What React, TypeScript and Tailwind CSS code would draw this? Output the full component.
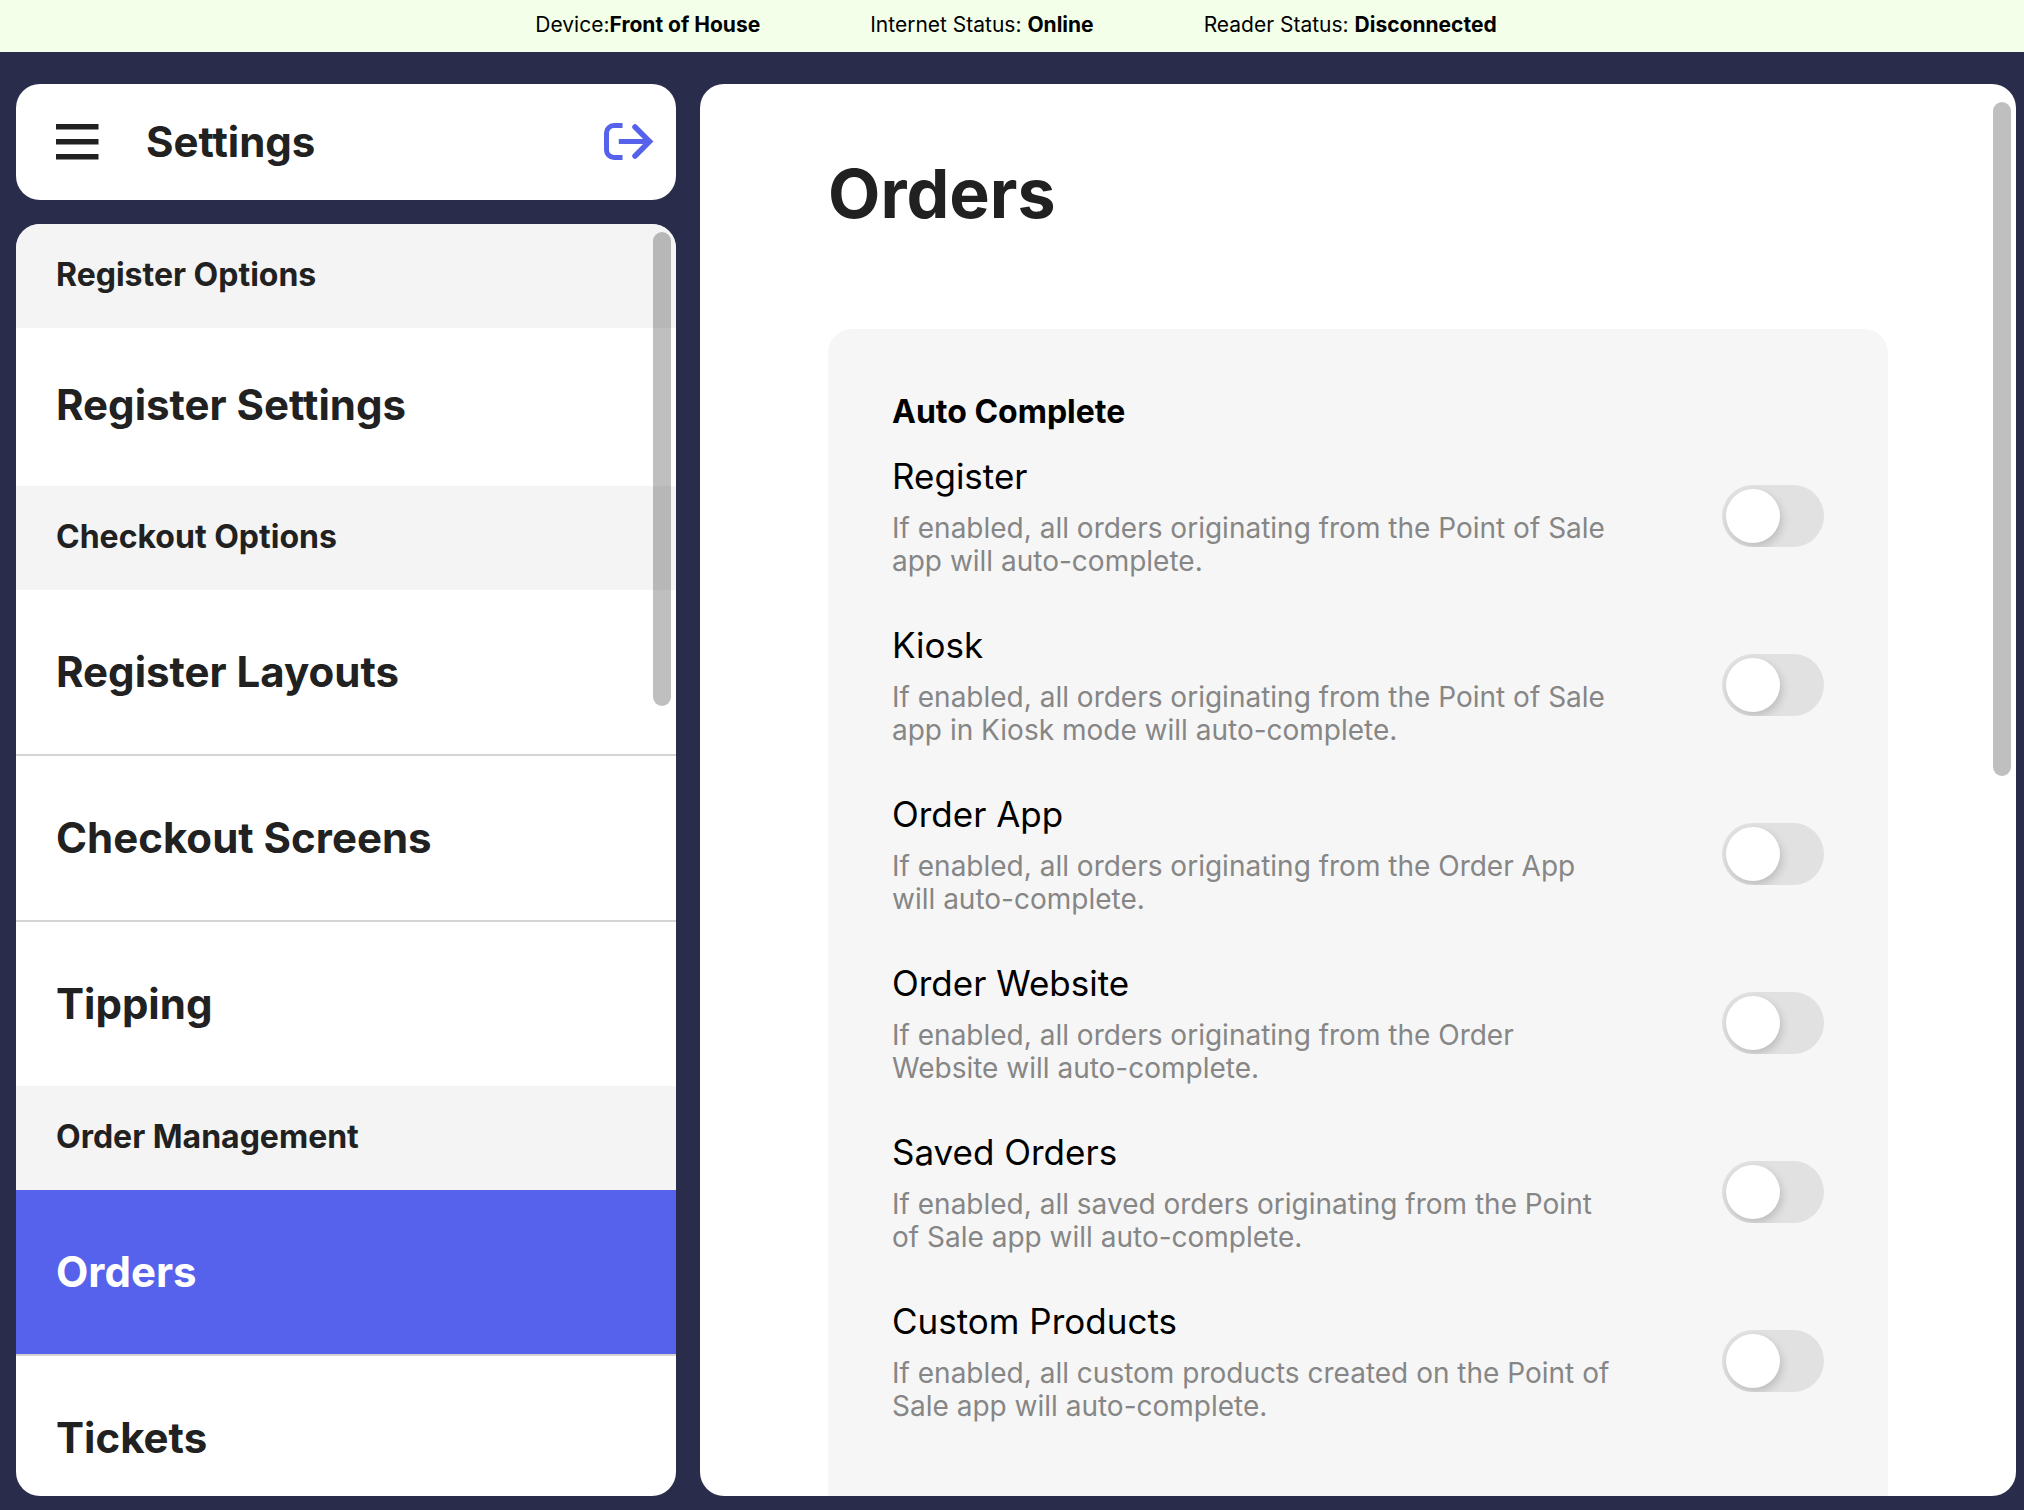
import { Fragment } from "react";

type Item = { label: string; active?: boolean };
type Section = { heading: string; items: Item[]; compact?: boolean };

const sections: Section[] = [
  { heading: "Register Options", items: [{ label: "Register Settings" }], compact: true },
  {
    heading: "Checkout Options",
    items: [{ label: "Register Layouts" }, { label: "Checkout Screens" }, { label: "Tipping" }],
  },
  { heading: "Order Management", items: [{ label: "Orders", active: true }, { label: "Tickets" }] },
];

const options = [
  {
    id: "register",
    title: "Register",
    text: "If enabled, all orders originating from the Point of Sale app will auto-complete.",
  },
  {
    id: "kiosk",
    title: "Kiosk",
    text: "If enabled, all orders originating from the Point of Sale app in Kiosk mode will auto-complete.",
  },
  {
    id: "order-app",
    title: "Order App",
    text: "If enabled, all orders originating from the Order App will auto-complete.",
  },
  {
    id: "order-website",
    title: "Order Website",
    text: "If enabled, all orders originating from the Order Website will auto-complete.",
  },
  {
    id: "saved-orders",
    title: "Saved Orders",
    text: "If enabled, all saved orders originating from the Point of Sale app will auto-complete.",
  },
  {
    id: "custom-products",
    title: "Custom Products",
    text: "If enabled, all custom products created on the Point of Sale app will auto-complete.",
  },
];

function StatusBar() {
  return (
    <header className="flex h-[52px] shrink-0 items-center justify-center gap-[110px] bg-[#f3ffe9] pb-0.5 pl-2 text-[21px] leading-6 text-black">
      <p>
        Device:<strong>Front of House</strong>
      </p>
      <p>
        Internet Status: <strong>Online</strong>
      </p>
      <p>
        Reader Status: <strong>Disconnected</strong>
      </p>
    </header>
  );
}

function MenuIcon() {
  return (
    <svg width="44" height="38" viewBox="0 0 44 38" fill="#212121" aria-hidden="true">
      <rect x="0" y="1" width="42.5" height="5.5" />
      <rect x="0" y="16" width="42.5" height="5.5" />
      <rect x="0" y="31" width="42.5" height="5.5" />
    </svg>
  );
}

function LogoutIcon() {
  return (
    <svg width="50" height="38" viewBox="0 0 50 38" fill="none" stroke="#5661ec" strokeWidth="5" aria-hidden="true">
      <path d="M18.5 2.5H10A7.5 7.5 0 0 0 2.5 10V27A7.5 7.5 0 0 0 10 34.5H18.5" />
      <path d="M14.8 18.5H45" />
      <path d="M31 4L45.500 18.500L31 33" strokeLinecap="round" strokeWidth="5.500" />
    </svg>
  );
}

function Sidebar() {
  return (
    <div className="flex w-[33%] shrink-0 flex-col gap-6">
      <div className="flex h-[116px] shrink-0 items-center rounded-3xl bg-white pr-[22px] pl-10">
        <button type="button" aria-label="Menu">
          <MenuIcon />
        </button>
        <h2 className="ml-[46px] flex-1 text-[42px] leading-[50px] font-bold text-[#212121]">Settings</h2>
        <button type="button" aria-label="Log out">
          <LogoutIcon />
        </button>
      </div>
      <div className="relative min-h-0 flex-1 overflow-hidden rounded-3xl bg-white">
        <nav className="h-full overflow-y-auto text-[#212121] [scrollbar-width:none]">
          {sections.map((section) => (
            <Fragment key={section.heading}>
              <h3 className="flex h-[104px] items-center bg-[#f4f4f4] px-10 pb-0.5 text-[32px] leading-9 font-bold">
                {section.heading}
              </h3>
              <ul className="divide-y-2 divide-[#d4d4d4]">
                {section.items.map((item) => (
                  <li key={item.label}>
                    <a
                      href="#"
                      aria-current={item.active ? "page" : undefined}
                      className={`flex items-center px-10 text-[42px] leading-[50px] font-bold ${
                        section.compact ? "h-[158px] pb-1" : "h-[164px]"
                      } ${item.active ? "bg-[#5661ec] text-white" : ""}`}
                    >
                      {item.label}
                    </a>
                  </li>
                ))}
              </ul>
            </Fragment>
          ))}
        </nav>
        <div className="absolute top-2 right-[5px] h-[474px] w-[18px] rounded-full bg-black/25" />
      </div>
    </div>
  );
}

function OptionRow({ id, title, text }: { id: string; title: string; text: string }) {
  return (
    <div className="flex items-center">
      <div className="mr-[104px] flex-1">
        <label htmlFor={id} className="block text-[35px] leading-[44px] text-black">
          {title}
        </label>
        <p id={`${id}-text`} className="mt-[14px] text-[28px] leading-[33px] text-[#868686]">
          {text}
        </p>
      </div>
      <input
        id={id}
        type="checkbox"
        role="switch"
        aria-describedby={`${id}-text`}
        className="h-[62px] w-[102px] shrink-0 appearance-none overflow-hidden rounded-full bg-[#e1e1e1] p-1 before:block before:size-[54px] before:rounded-full before:bg-white before:shadow-[2px_4px_8px_rgba(0,0,0,0.16)] checked:bg-[#5661ec] checked:before:ml-10"
      />
    </div>
  );
}

export default function App() {
  return (
    <div className="flex h-screen flex-col overflow-hidden bg-[#2a2c4b] font-[Inter,sans-serif]">
      <StatusBar />
      <div className="flex min-h-0 flex-1 gap-6 pt-8 pr-2 pb-[14px] pl-4">
        <Sidebar />
        <div className="relative min-w-0 flex-1 overflow-hidden rounded-3xl bg-white">
          <main className="h-full overflow-y-auto px-32 pt-[73px] [scrollbar-width:none]">
            <h1 className="text-[68px] leading-[72px] font-bold text-[#212121]">Orders</h1>
            <section className="mt-[100px] rounded-3xl bg-[#f6f6f6] px-16 pt-16 pb-32">
              <h2 className="text-[32px] leading-[38px] font-bold text-black">Auto Complete</h2>
              <div className="mt-[23px] flex flex-col gap-[45px]">
                {options.map((option) => (
                  <OptionRow key={option.id} {...option} />
                ))}
              </div>
            </section>
          </main>
          <div className="absolute top-[18px] right-[5px] h-[674px] w-[18px] rounded-full bg-black/25" />
        </div>
      </div>
    </div>
  );
}
